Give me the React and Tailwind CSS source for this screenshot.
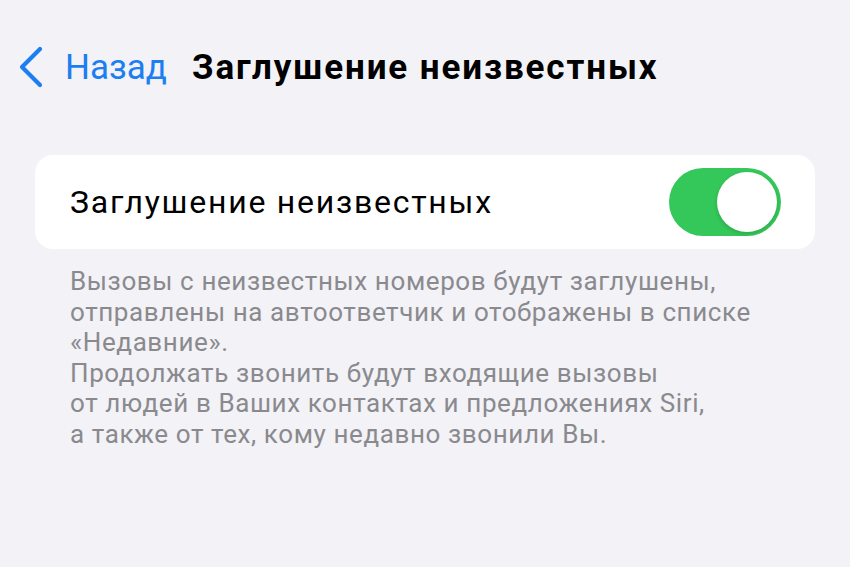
import { useState } from "react";

function BackChevron() {
  return (
    <svg width="26" height="42" viewBox="0 0 26 42" fill="none" className="shrink-0">
      <path d="M22 3 L4 21 L22 39" stroke="#1c7ef0" strokeWidth="4.2" strokeLinecap="round" strokeLinejoin="round" />
    </svg>
  );
}

function Toggle({ on, onChange }) {
  return (
    <button
      type="button"
      onClick={() => onChange(!on)}
      className={`relative h-[68px] w-[112px] shrink-0 rounded-full transition-colors ${on ? "bg-[#34c759]" : "bg-[#e5e5ea]"}`}
    >
      <span
        className={`absolute top-[4px] h-[60px] w-[60px] rounded-full bg-white shadow-[0_2px_4px_rgba(0,0,0,0.15)] transition-all ${on ? "left-[48px]" : "left-[4px]"}`}
      />
    </button>
  );
}

export default function App() {
  const [silence, setSilence] = useState(true);

  return (
    <div className="h-[567px] w-[850px] overflow-hidden bg-[#f2f2f7] font-['Roboto',sans-serif]">
      <div className="mt-[46px] flex h-[42px] items-center pl-[18px]">
        <BackChevron />
        <span className="ml-[21px] text-[35px] leading-none text-[#1c7ef0]">Назад</span>
        <span className="ml-[25px] text-[35px] font-bold leading-none tracking-[1.9px] text-black">
          Заглушение неизвестных
        </span>
      </div>

      <div className="mx-[35px] mt-[67px] flex h-[94px] items-center justify-between rounded-[18px] bg-white pl-[35px] pr-[34px]">
        <span className="text-[32px] leading-none tracking-[1.75px] text-black">Заглушение неизвестных</span>
        <Toggle on={silence} onChange={setSilence} />
      </div>

      <div className="mt-[17px] pl-[70px] pr-[40px] text-[26px] leading-[30.6px] tracking-[0.6px] text-[#8a8a8e]">
        <p>
          Вызовы с неизвестных номеров будут заглушены,
          <br />
          отправлены на автоответчик и отображены в списке
          <br />
          «Недавние».
        </p>
        <p>
          Продолжать звонить будут входящие вызовы
          <br />
          от людей в Ваших контактах и предложениях Siri,
          <br />а также от тех, кому недавно звонили Вы.
        </p>
      </div>
    </div>
  );
}
